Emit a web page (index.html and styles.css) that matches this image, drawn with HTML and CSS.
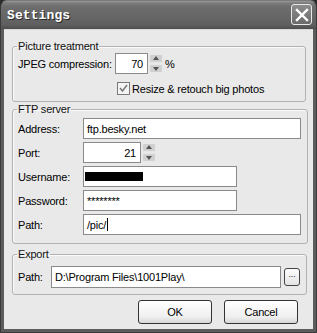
FILE: index.html
```html
<!DOCTYPE html>
<html>
<head>
<meta charset="utf-8">
<link rel="stylesheet" href="styles.css">
</head>
<body>
<div class="window">
  <div class="titlebar">
    <span class="title">Settings</span>
    <span class="close">
      <svg width="14" height="14" viewBox="0 0 14 14"><path d="M2 2 L12 12 M12 2 L2 12" stroke="#fff" stroke-width="2.4" stroke-linecap="square"/></svg>
    </span>
  </div>
  <div class="client">
    <fieldset class="group g1">
      <legend>Picture treatment</legend>
      <div class="row jpeg">
        <label class="lbl">JPEG compression:</label>
        <div class="spin-field">
          <span class="input num w31">70</span>
          <span class="spinner"><span class="sb up"></span><span class="sb down"></span></span>
        </div>
        <span class="pct">%</span>
      </div>
      <div class="row check">
        <span class="checkbox"><svg width="11" height="11" viewBox="0 0 11 11"><path d="M2 5 L4.5 8 L9 2" stroke="#7a7a7a" stroke-width="1.6" fill="none"/></svg></span>
        <span>Resize &amp; retouch big photos</span>
      </div>
    </fieldset>

    <fieldset class="group g2">
      <legend>FTP server</legend>
      <div class="form">
        <label class="lbl">Address:</label>
        <span class="input wide">ftp.besky.net</span>
        <label class="lbl">Port:</label>
        <div class="spin-field">
          <span class="input num w58">21</span>
          <span class="spinner"><span class="sb up"></span><span class="sb down"></span></span>
        </div>
        <label class="lbl">Username:</label>
        <span class="input mid"><span class="redact"></span></span>
        <label class="lbl">Password:</label>
        <span class="input mid">********</span>
        <label class="lbl">Path:</label>
        <span class="input wide">/pic/<span class="caret"></span></span>
      </div>
    </fieldset>

    <fieldset class="group g3">
      <legend>Export</legend>
      <div class="row export">
        <label class="lbl">Path:</label>
        <span class="input exp">D:\Program Files\1001Play\</span>
        <span class="browse">...</span>
      </div>
    </fieldset>

    <div class="buttons">
      <span class="btn">OK</span>
      <span class="btn">Cancel</span>
    </div>
  </div>
</div>
</body>
</html>
```

FILE: styles.css
```css
html, body {
  margin: 0;
  padding: 0;
  background: #2a2a2a;
}
body {
  width: 317px;
  height: 333px;
  overflow: hidden;
  font-family: "Liberation Sans", Arial, sans-serif;
  font-size: 11px;
  letter-spacing: -0.2px;
  color: #000;
}
.window {
  width: 317px;
  height: 333px;
  box-sizing: border-box;
  background: #5c5c5c;
  border-radius: 7px 7px 0 0;
  display: flex;
  flex-direction: column;
  border: 1px solid #3a3a3a;
  border-top-color: #7a7a7a;
}
.titlebar {
  height: 28px;
  flex: none;
  display: flex;
  align-items: center;
  justify-content: space-between;
  padding: 0 4px 0 6px;
  background: linear-gradient(#9a9a9a 0px, #7c7c7c 2px, #6c6c6c 6px, #666 16px, #5e5e5e 24px, #4e4e4e 28px);
  border-radius: 6px 6px 0 0;
}
.title {
  font-family: "Liberation Mono", "DejaVu Sans Mono", monospace;
  font-weight: bold;
  font-size: 13px;
  color: #fff;
  text-shadow: 1px 1px 0 #2a2a2a;
  letter-spacing: 0.1px;
  margin-top: 1px;
}
.close {
  width: 19px;
  height: 19px;
  border: 1px solid #e8e8e8;
  border-radius: 3px;
  background: linear-gradient(#8c8c8c, #6a6a6a);
  display: flex;
  align-items: center;
  justify-content: center;
  margin-top: -1px;
}
.client {
  flex: 1;
  margin: 0 3px 3px 3px;
  background: #e9e9e9;
  padding: 10px 7px 0 8px;
  border-top: 1px solid #d8d8d8;
}
.group {
  margin: 0;
  border: 1px solid #b2b2b2;
  border-radius: 3px;
  padding: 0 6px 0 5px;
  box-shadow: inset 1px 1px 0 #fafafa;
}
.group legend {
  padding: 0 1px;
  margin-left: -1px;
  line-height: 13px;
  color: #111;
}
.g1 { padding-bottom: 6px; }
.g2 { margin-top: 1px; padding-bottom: 8px; }
.g3 { margin-top: 4px; padding-bottom: 6px; }

.lbl { white-space: nowrap; }
.row {
  display: flex;
  align-items: center;
}
.jpeg { height: 21px; margin-top: 0; }
.jpeg .lbl { width: 97px; flex: none; }
.check {
  margin-top: 8px;
  padding-left: 99px;
  height: 13px;
}
.checkbox {
  width: 11px;
  height: 11px;
  border: 1px solid #7a7a7a;
  background: #f4f4f4;
  margin-right: 2px;
  display: flex;
}
.pct { margin-left: 2px; }

.input {
  box-sizing: border-box;
  height: 21px;
  background: #fff;
  border: 1px solid #8a8a8a;
  display: flex;
  align-items: center;
  padding: 0 3px;
  white-space: nowrap;
  overflow: hidden;
}
.num { justify-content: flex-end; padding-right: 4px; }
.w31 { width: 33px; }
.w58 { width: 58px; }
.wide { width: 218px; }
.mid { width: 154px; }
.exp { width: 230px; height: 22px; }

.spin-field {
  display: flex;
  align-items: stretch;
}
.spinner {
  width: 14px;
  display: flex;
  flex-direction: column;
  justify-content: center;
  gap: 1px;
  margin-left: 1px;
}
.sb {
  height: 9px;
  background: #d0d0d0;
  border: 1px solid #e8e8e8;
  box-sizing: border-box;
  position: relative;
  border-radius: 2px;
}
.sb::after {
  content: "";
  position: absolute;
  left: 3px;
  width: 0;
  height: 0;
  border-left: 3px solid transparent;
  border-right: 3px solid transparent;
}
.up::after { top: 1px; border-bottom: 4px solid #555; }
.down::after { top: 2px; border-top: 4px solid #555; }

.form {
  margin-top: 2px;
  display: grid;
  grid-template-columns: 65px auto;
  row-gap: 3px;
  align-items: center;
  justify-items: start;
}
.redact {
  width: 58px;
  height: 9px;
  background: #000;
  margin-left: -2px;
}
.caret {
  width: 1px;
  height: 13px;
  background: #000;
  margin-left: 1px;
}

.export { margin-top: 5px; height: 22px; }
.export .lbl { width: 33px; }
.browse {
  box-sizing: border-box;
  width: 16px;
  height: 18px;
  margin-left: 3px;
  border: 1px solid #444;
  border-radius: 3px;
  background: linear-gradient(#fdfdfd, #e4e4e4);
  display: flex;
  align-items: flex-start;
  justify-content: center;
  font-size: 9px;
  line-height: 10px;
  color: #333;
}

.buttons {
  display: flex;
  justify-content: flex-end;
  gap: 12px;
  margin-top: 5px;
  padding-right: 8px;
}
.btn {
  box-sizing: border-box;
  width: 74px;
  height: 24px;
  border: 1px solid #333;
  border-radius: 3px;
  background: linear-gradient(#ffffff, #f0f0f0 70%, #d8d8d8);
  display: flex;
  align-items: center;
  justify-content: center;
}
```
